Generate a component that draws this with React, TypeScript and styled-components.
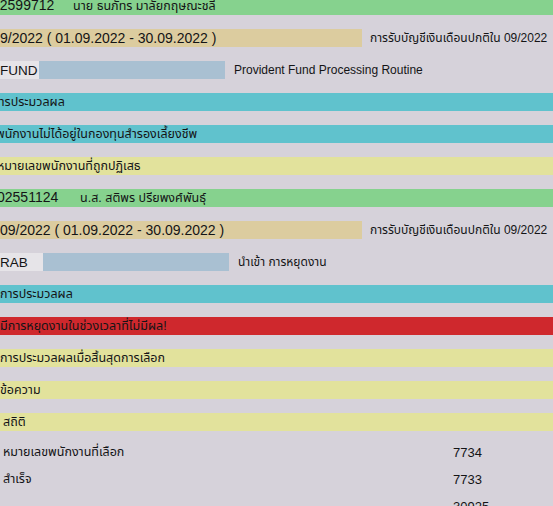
import React from "react";
import styled, { createGlobalStyle } from "styled-components";

const Global = createGlobalStyle`
  html, body { margin: 0; padding: 0; background: #d6d2da; }
  body {
    width: 553px; height: 506px; overflow: hidden;
    font-family: "Liberation Sans", "Noto Sans Thai", "Noto Sans", "DejaVu Sans", sans-serif;
    color: #141416;
  }
`;

type Tone = "green" | "tan" | "cyan" | "yellow" | "red" | "none";

const tones: Record<Tone, string> = {
  green: "#86d28e",
  tan: "#dccc9f",
  cyan: "#60c2cd",
  yellow: "#e2e29c",
  red: "#cf282d",
  none: "transparent",
};

const Log = styled.div`
  display: flex;
  flex-direction: column;
  gap: 14px;
  margin-top: -3px;
  font-size: 12.5px;
`;

const Row = styled.div`
  display: flex;
  align-items: center;
  height: 18px;
  white-space: nowrap;
`;

const Band = styled.div<{ $tone: Tone }>`
  flex: 1;
  height: 100%;
  display: flex;
  align-items: center;
  background: ${(p) => tones[p.$tone]};
  overflow: hidden;
`;

const Text = styled.span<{ $shift?: number }>`
  margin-left: ${(p) => p.$shift ?? 0}px;
`;

const Num = styled.span<{ $w?: number }>`
  font-size: 14px;
  display: inline-block;
  width: ${(p) => (p.$w ? `${p.$w}px` : "auto")};
`;

const PartBand = styled.div<{ $tone: Tone; $w: number }>`
  width: ${(p) => p.$w}px;
  height: 100%;
  display: flex;
  align-items: center;
  background: ${(p) => tones[p.$tone]};
  overflow: hidden;
  font-size: 14px;
`;

const Side = styled.span`
  margin-left: 8px;
  font-size: 12px;
`;

const KeyBox = styled.div<{ $w: number }>`
  width: ${(p) => p.$w}px;
  height: 100%;
  display: flex;
  align-items: center;
  background: #e6e4e8;
  font-size: 13.5px;
`;

const BlueBox = styled.div`
  width: 186px;
  height: 100%;
  background: #a9c0d2;
`;

const Desc = styled.span`
  margin-left: 9px;
  font-size: 12px;
`;

const Stats = styled.div`
  display: flex;
  flex-direction: column;
  gap: 9px;
  margin-top: -2px;
`;

const StatRow = styled(Row)`
  padding-left: 3px;
`;

const StatLabel = styled.span`
  width: 450px;
`;

const StatValue = styled.span`
  font-size: 13px;
`;

export default function App() {
  return (
    <>
      <Global />
      <Log>
        <Row>
          <Band $tone="green">
            <Text $shift={-8}>
              <Num $w={81}>02599712</Num>นาย ธนภัทร มาลัยกฤษณะชลี
            </Text>
          </Band>
        </Row>
        <Row>
          <PartBand $tone="tan" $w={362}>9/2022 ( 01.09.2022 - 30.09.2022 )</PartBand>
          <Side>การรับบัญชีเงินเดือนปกติใน 09/2022</Side>
        </Row>
        <Row>
          <KeyBox $w={39}>FUND</KeyBox>
          <BlueBox />
          <Desc>Provident Fund Processing Routine</Desc>
        </Row>
        <Row>
          <Band $tone="cyan">
            <Text $shift={-8}>การประมวลผล</Text>
          </Band>
        </Row>
        <Row>
          <Band $tone="cyan">
            <Text $shift={-4}>พนักงานไม่ได้อยู่ในกองทุนสำรองเลี้ยงชีพ</Text>
          </Band>
        </Row>
        <Row>
          <Band $tone="yellow">
            <Text $shift={-3}>หมายเลขพนักงานที่ถูกปฏิเสธ</Text>
          </Band>
        </Row>
        <Row>
          <Band $tone="green">
            <Text $shift={-3}>
              <Num $w={83}>02551124</Num>น.ส. สติพร ปรียพงศ์พันธุ์
            </Text>
          </Band>
        </Row>
        <Row>
          <PartBand $tone="tan" $w={362}>09/2022 ( 01.09.2022 - 30.09.2022 )</PartBand>
          <Side>การรับบัญชีเงินเดือนปกติใน 09/2022</Side>
        </Row>
        <Row>
          <KeyBox $w={43}>RAB</KeyBox>
          <BlueBox />
          <Desc>นำเข้า การหยุดงาน</Desc>
        </Row>
        <Row>
          <Band $tone="cyan">
            <Text>การประมวลผล</Text>
          </Band>
        </Row>
        <Row>
          <Band $tone="red">
            <Text>มีการหยุดงานในช่วงเวลาที่ไม่มีผล!</Text>
          </Band>
        </Row>
        <Row>
          <Band $tone="yellow">
            <Text>การประมวลผลเมื่อสิ้นสุดการเลือก</Text>
          </Band>
        </Row>
        <Row>
          <Band $tone="yellow">
            <Text>ข้อความ</Text>
          </Band>
        </Row>
        <Row>
          <Band $tone="yellow">
            <Text $shift={3}>สถิติ</Text>
          </Band>
        </Row>
        <Stats>
          <StatRow>
            <StatLabel>หมายเลขพนักงานที่เลือก</StatLabel>
            <StatValue>7734</StatValue>
          </StatRow>
          <StatRow>
            <StatLabel>สำเร็จ</StatLabel>
            <StatValue>7733</StatValue>
          </StatRow>
          <StatRow>
            <StatLabel></StatLabel>
            <StatValue>30925</StatValue>
          </StatRow>
        </Stats>
      </Log>
    </>
  );
}
